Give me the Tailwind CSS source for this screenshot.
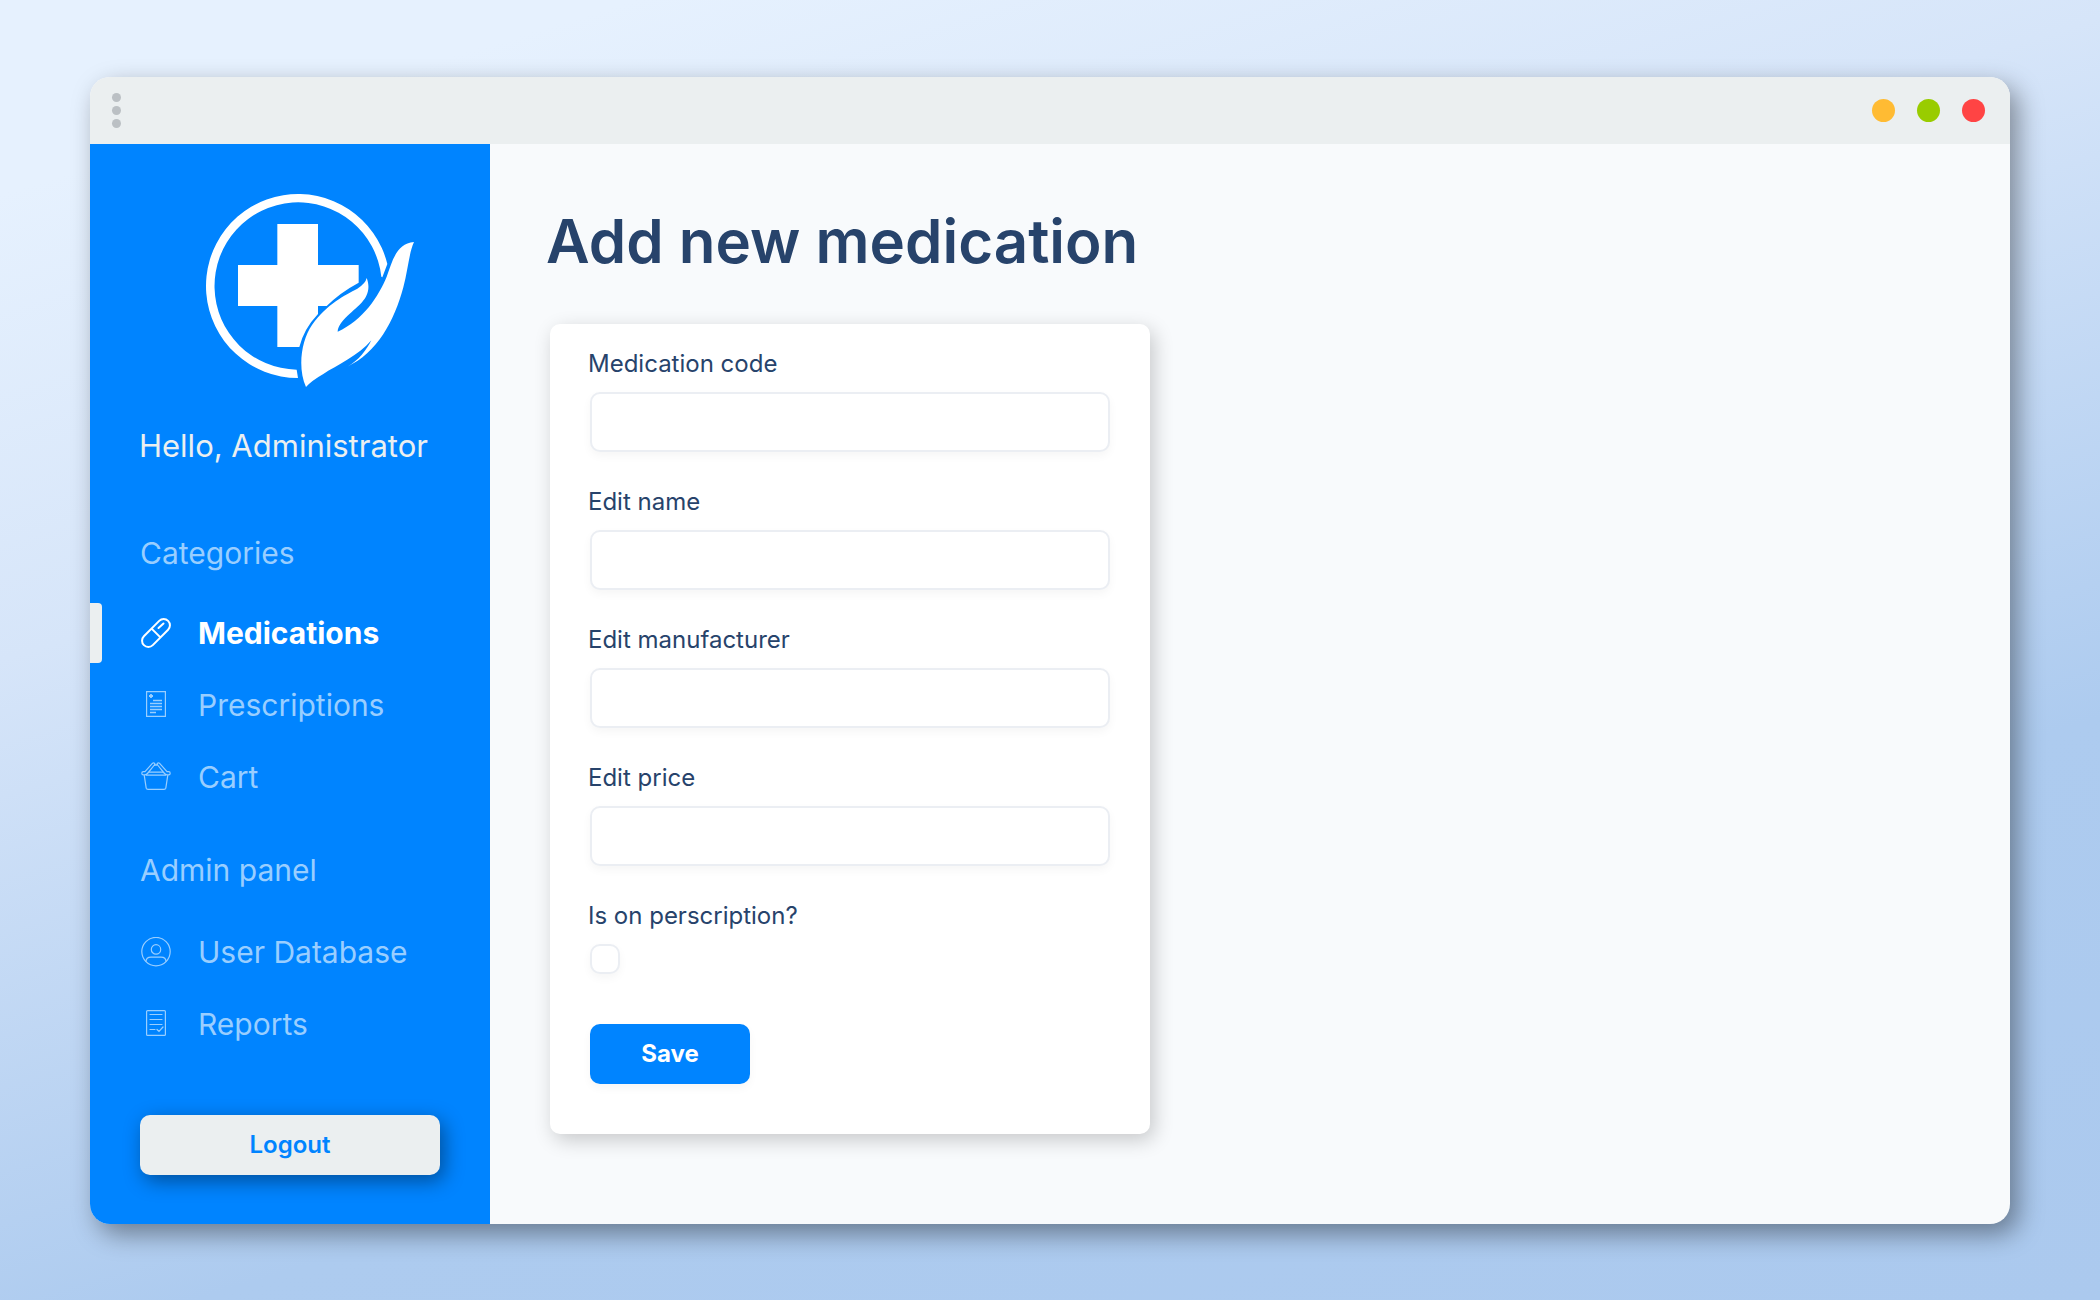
<!DOCTYPE html>
<html lang="en">
<head>
<meta charset="utf-8">
<meta name="viewport" content="width=device-width, initial-scale=1">
<title>Add new medication</title>
<script src="https://cdn.jsdelivr.net/npm/@tailwindcss/browser@4"></script>
</head>
<body class="min-h-screen bg-[linear-gradient(163deg,#e6f1fe_0%,#e6f1fe_10%,#d6e5f9_34%,#adcbef_70%,#abc9ee_100%)] px-[90px] pt-[77px] pb-[76px] font-['Inter',sans-serif]">
<div class="overflow-hidden rounded-[20px] bg-[#f8fafc] shadow-[8px_10px_26px_rgba(0,0,0,0.4)]">
  <header class="flex h-[67px] items-center justify-between bg-[#ebeff0] pr-[25px] pl-[22px]">
    <button type="button" aria-label="Menu" class="flex flex-col gap-1">
      <span class="size-[9px] rounded-full bg-[#bbc0c4]"></span>
      <span class="size-[9px] rounded-full bg-[#bbc0c4]"></span>
      <span class="size-[9px] rounded-full bg-[#bbc0c4]"></span>
    </button>
    <div class="flex gap-[22px]">
      <button type="button" aria-label="Minimize" class="size-[23px] rounded-full bg-[#ffbb33]"></button>
      <button type="button" aria-label="Maximize" class="size-[23px] rounded-full bg-[#99cc00]"></button>
      <button type="button" aria-label="Close" class="size-[23px] rounded-full bg-[#ff4444]"></button>
    </div>
  </header>
  <div class="flex">
    <aside class="w-[400px] shrink-0 bg-[#0084ff] pt-9 pb-[49px] text-[30px] leading-10 text-[#99ceff]">
      <svg class="ml-[100px] h-[220px] w-[240px]" viewBox="0 0 720 660" role="img" aria-label="Clinic logo" fill="#fff">
        <path d="M324 594A276 276 0 1 1 592 252L577 292L574 290A251 251 0 1 0 320 569Z"/>
        <path d="M262 132H384V255H506V308Q450 338 410 378H384V402Q342 446 328 501H262V378H144V255H262Z"/>
        <path d="M348 621C322 565 334 480 366 435C410 372 465 345 502 326Q527 310 530 294C542 325 532 349 516 367C482 402 445 425 443 455C520 420 566 348 590 290C606 247 618 190 672 186C657 218 654 270 640 322C613 424 560 520 472 560C505 543 531 508 544 481C506 527 440 556 400 582Q365 602 348 621Z"/>
      </svg>
      <p class="mt-[26px] ml-[49px] text-[31px] text-[#ebeff0]">Hello, Administrator</p>
      <nav>
        <h2 class="mt-[67px] ml-[50px]">Categories</h2>
        <ul class="mt-[30px] flex flex-col gap-3">
          <li><a href="#" aria-current="page" class="flex h-[60px] items-center font-bold text-white"><span class="h-[60px] w-3 rounded-r bg-[#ebeff0]"></span>
            <svg class="mr-[27px] ml-[39px] size-[30px]" viewBox="0 0 30 30" fill="none" stroke="currentColor" stroke-width="2" stroke-linecap="round"><path d="M2.9 18.2L18.2 2.9A6.2 6.2 0 0 1 27.1 11.8L11.8 27.1A6.2 6.2 0 0 1 2.9 18.2ZM10.6 10.6L19.4 19.4M17.5 10L22.5 5.5"/></svg>Medications</a></li>
          <li><a href="#" class="flex h-[60px] items-center pl-[51px]"><svg class="mr-[27px] size-[30px]" viewBox="0 0 30 30" fill="none" stroke="currentColor" stroke-width="1.2"><path d="M5.6 1.6H24.4V26.4H5.6Z"/><path d="M8 6H12M10 4V8" stroke-width="1.8"/><path d="M12 10.5H21M9 13.5H21M9 16.5H21M9 19.5H21M9 22.5H15" stroke-width="1.4"/></svg>Prescriptions</a></li>
          <li><a href="#" class="flex h-[60px] items-center pl-[51px]"><svg class="mr-[27px] size-[30px]" viewBox="0 0 30 30" fill="none" stroke="currentColor" stroke-width="1.2" stroke-linejoin="round"><path d="M3.2 13.2L5.2 26.2Q5.5 27.4 7 27.4H23Q24.5 27.4 24.8 26.2L26.8 13.2M5 13.2H25M8 10.2H22"/><path d="M4 12.8H2.4A1.6 1.6 0 0 1 2.4 9.6H4L11.6 1.2Q12.6 .4 13.4 1.2Q14.2 2 13.4 3L6.5 11.5Q5.4 12.8 4 12.8ZM26 12.8H27.6A1.6 1.6 0 0 0 27.6 9.6H26L18.4 1.2Q17.4 .4 16.6 1.2Q15.8 2 16.6 3L23.5 11.5Q24.6 12.8 26 12.8ZM13.8 3.6L15 2.6L16.2 3.6"/></svg>Cart</a></li>
        </ul>
        <h2 class="mt-[43px] ml-[50px]">Admin panel</h2>
        <ul class="mt-8 flex flex-col gap-3">
          <li><a href="#" class="flex h-[60px] items-center pl-[51px]"><svg class="mr-[27px] size-[30px]" viewBox="0 0 30 30" fill="none" stroke="currentColor" stroke-width="1.2"><circle cx="15" cy="14.6" r="14.2"/><circle cx="15" cy="12.4" r="4.7"/><path d="M5 24.8C5 21.6 7 20.2 10 20.2H20C23 20.2 25 21.6 25 24.8"/></svg>User Database</a></li>
          <li><a href="#" class="flex h-[60px] items-center pl-[51px]"><svg class="mr-[27px] size-[30px]" viewBox="0 0 30 30" fill="none" stroke="currentColor" stroke-width="1.2" stroke-linecap="round"><rect x="5.6" y="1.6" width="18.8" height="24.8" rx="1"/><path d="M9 5.5H21M9 10.5H21M9 15.5H21M9 20.5H14M16 20.5L18 22.5L22 18"/></svg>Reports</a></li>
        </ul>
      </nav>
      <button type="button" class="mt-[61px] ml-[50px] block h-[60px] w-[300px] rounded-[10px] bg-[#ebeff0] text-2xl font-semibold text-[#0084ff] shadow-[4px_6px_20px_rgba(0,0,0,0.4)]">Logout</button>
    </aside>
    <main class="min-w-0 flex-1 pt-[61px]">
      <h1 class="px-14 text-[60px] leading-[72px] font-semibold text-[#27436b]">Add new medication</h1>
      <form class="mx-[60px] mt-[47px] flex w-[600px] flex-col rounded-[10px] bg-white px-[38px] pt-6 pb-[50px] text-2xl leading-8 text-[#27436b] shadow-[4px_6px_20px_rgba(0,0,0,0.2)]">
        <label for="code">Medication code</label>
        <input id="code" type="text" class="mx-0.5 mt-3 mb-[34px] h-[60px] rounded-[10px] border-2 border-[#ebeef3] bg-white px-4 shadow-[0_4px_10px_rgba(0,0,0,0.04)]">
        <label for="name">Edit name</label>
        <input id="name" type="text" class="mx-0.5 mt-3 mb-[34px] h-[60px] rounded-[10px] border-2 border-[#ebeef3] bg-white px-4 shadow-[0_4px_10px_rgba(0,0,0,0.04)]">
        <label for="maker">Edit manufacturer</label>
        <input id="maker" type="text" class="mx-0.5 mt-3 mb-[34px] h-[60px] rounded-[10px] border-2 border-[#ebeef3] bg-white px-4 shadow-[0_4px_10px_rgba(0,0,0,0.04)]">
        <label for="price">Edit price</label>
        <input id="price" type="text" class="mx-0.5 mt-3 mb-[34px] h-[60px] rounded-[10px] border-2 border-[#ebeef3] bg-white px-4 shadow-[0_4px_10px_rgba(0,0,0,0.04)]">
        <label for="rx">Is on perscription?</label>
        <input id="rx" type="checkbox" class="mx-0.5 mt-3 size-[30px] appearance-none rounded-[10px] border-2 border-[#ebeef3] bg-white shadow-[0_4px_10px_rgba(0,0,0,0.04)] checked:bg-[#0084ff]">
        <button type="submit" class="mx-0.5 mt-[50px] h-[60px] w-40 rounded-[10px] bg-[#0084ff] font-bold text-white shadow-[0_4px_10px_rgba(0,0,0,0.04)]">Save</button>
      </form>
    </main>
  </div>
</div>
</body>
</html>
